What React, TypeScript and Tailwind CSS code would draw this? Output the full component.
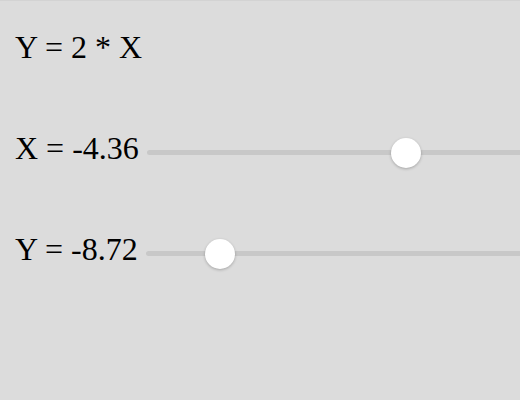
import React from 'react';

type SliderRowProps = {
  label: string;
  thumb: number;
};

const SliderRow = ({ label, thumb }: SliderRowProps) => {
  return (
    <div className="flex items-center h-8">
      <span className="leading-8 whitespace-nowrap">{label}</span>
      <div className="relative flex-1 ml-[8px] mt-[9px] h-[5px] rounded-l-full bg-[#c8c8c8]">
        <div
          className="absolute top-1/2 w-[30px] h-[30px] -translate-x-1/2 -translate-y-1/2 rounded-full bg-white shadow-[0_1px_3px_rgba(0,0,0,0.25)]"
          style={{ left: thumb }}
        />
      </div>
    </div>
  );
};

const App = () => {
  return (
    <div
      className="w-[520px] h-[400px] overflow-hidden bg-[#dcdcdc] border-t border-[#d3d3d3] text-[32px] text-black"
      style={{ fontFamily: '"Liberation Serif", "Times New Roman", serif' }}
    >
      <div className="flex flex-col gap-[69px] pt-[30px] pl-[15px]">
        <div className="leading-8">Y = 2 * X</div>
        <SliderRow label="X = -4.36" thumb={259} />
        <SliderRow label="Y = -8.72" thumb={74} />
      </div>
    </div>
  );
};

export default App;
